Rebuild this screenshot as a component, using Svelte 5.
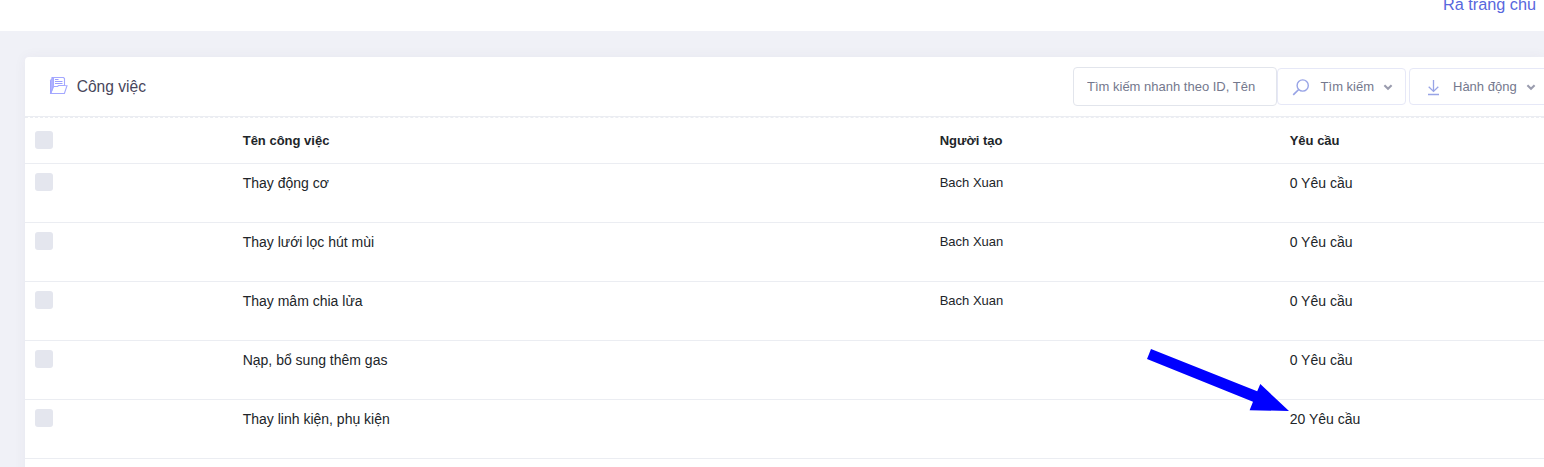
<script>
  const rows = [
    { name: 'Thay động cơ', creator: 'Bach Xuan', count: 0 },
    { name: 'Thay lưới lọc hút mùi', creator: 'Bach Xuan', count: 0 },
    { name: 'Thay mâm chia lửa', creator: 'Bach Xuan', count: 0 },
    { name: 'Nạp, bổ sung thêm gas', creator: '', count: 0 },
    { name: 'Thay linh kiện, phụ kiện', creator: '', count: 20 }
  ];
</script>

{#snippet chevron()}
  <svg class="chevron" width="10" height="8" viewBox="0 0 10 8"><path d="M1.4 2.2 5 5.7 8.6 2.2" fill="none" stroke="#9a9cae" stroke-width="2.1" /></svg>
{/snippet}

<div class="page">
  <header class="topbar"><a href="#home">Ra trang chủ</a></header>
  <main class="card">
    <div class="head">
      <svg class="folder" width="20" height="20" viewBox="0 0 20 20" fill="none">
        <path d="M1.5 18V4.2L2.8 2.8V1.5H4.5V9.5L2 17Z" fill="#b0b3ff" stroke="#989cff" stroke-width=".9" />
        <path d="M4.5 9.5V1.5H14.5L15.5 2.5V9.5M1.6 17.5 4.6 10.5H8.5L9.6 9.5H15.5L18 9.7 15.4 17.5Z" stroke="#a4a8ff" stroke-width="1.1" />
        <path d="M6 3.5H9.5M6 5.5H13.5M6 7.5H13.5" stroke="#9a9eff" stroke-width="1" />
      </svg>
      <h3>Công việc</h3>
      <div class="tools">
        <input type="text" placeholder="Tìm kiếm nhanh theo ID, Tên" />
        <button class="search">
          <svg width="18" height="18" viewBox="0 0 18 18" fill="none" stroke="#98a4e6" stroke-width="1.4"><circle cx="10.7" cy="7.5" r="5.6" /><path d="M6.7 11.5 1.2 16.8" stroke-width="1.7" /></svg>
          <span>Tìm kiếm</span>
          {@render chevron()}
        </button>
        <button class="action">
          <svg width="18" height="18" viewBox="0 0 18 18" fill="none" stroke="#98a4e6" stroke-width="1.3"><path d="M9.5 2V13M4.7 8.8 9.5 13.4 14.3 8.8M4 16.5H15" /></svg>
          <span>Hành động</span>
          {@render chevron()}
        </button>
      </div>
    </div>
    <div class="table">
      <div class="row titles">
        <i class="check"></i><b>Tên công việc</b><b>Người tạo</b><b>Yêu cầu</b>
      </div>
      {#each rows as row}
        <div class="row">
          <i class="check"></i><span>{row.name}</span><span class="creator">{row.creator}</span><span>{row.count} Yêu cầu</span>
        </div>
      {/each}
    </div>
  </main>
  <svg class="arrow" width="144" height="64" viewBox="0 0 144 64"><path d="M5 1 111.2 43.3 114.3 36 143 63 103.6 62.2 107 53.7 1 11Z" fill="#0000ff" /></svg>
</div>

<style>
  :global(body) { margin: 0; overflow: hidden; }
  .page { position: relative; height: 467px; overflow: hidden; background: #f0f1f7; font-family: "Liberation Sans", Arial, sans-serif; color: #212529; }
  .topbar { height: 31px; background: #fff; display: flex; justify-content: flex-end; padding-right: 8px; box-sizing: border-box; }
  .topbar a { color: #5867dd; text-decoration: none; font-size: 16.25px; line-height: 20px; margin-top: -6px; white-space: nowrap; }
  .card { margin: 26px 0 0 25px; height: 440px; background: #fff; border-radius: 4px 0 0 0; box-shadow: 0 0 13px rgba(82, 63, 105, .05); }
  .head { height: 59px; display: flex; align-items: center; padding-left: 24px; border-bottom: 1px solid #ebedf2; }
  .folder { flex: none; margin-right: 7.7px; margin-top: -1px; }
  h3 { margin: 0; font-size: 15.6px; font-weight: 400; line-height: 20px; color: #48465b; }
  .tools { width: 471px; margin-left: auto; flex: none; display: flex; align-items: center; }
  input { box-sizing: border-box; width: 204px; height: 39px; border: 1px solid #e2e5ec; border-radius: 4px; padding: 0 13px; font: 13px "Liberation Sans", Arial, sans-serif; background: #fff; outline: 0; }
  input::placeholder { color: #74788d; opacity: 1; }
  button { box-sizing: border-box; flex: none; height: 37px; border: 1px solid #e6e8f7; border-radius: 4px; background: #fff; padding: 0 0 0 14px; display: flex; align-items: center; font: 13px "Liberation Sans", Arial, sans-serif; color: #74788d; }
  button span { margin-left: 10.6px; white-space: nowrap; }
  .search { width: 129px; }
  .action { width: 150px; margin-left: 3px; }
  .action span { margin-left: 11px; }
  .chevron { margin-left: 9px; }
  .table { border-top: 1px dashed #ebedf2; }
  .row { box-sizing: border-box; height: 59px; border-bottom: 1px solid #ebedf2; display: grid; grid-template-columns: 207.7px 697px 350px 1fr; padding: 9px 0 0 10px; font-size: 14px; line-height: 20px; }
  .titles { height: 46px; padding-top: 13px; font-size: 13px; }
  .creator { font-size: 13px; }
  .check { width: 18px; height: 18px; border-radius: 3px; background: #e4e6ee; }
  .arrow { position: absolute; left: 1146px; top: 348px; }
</style>
